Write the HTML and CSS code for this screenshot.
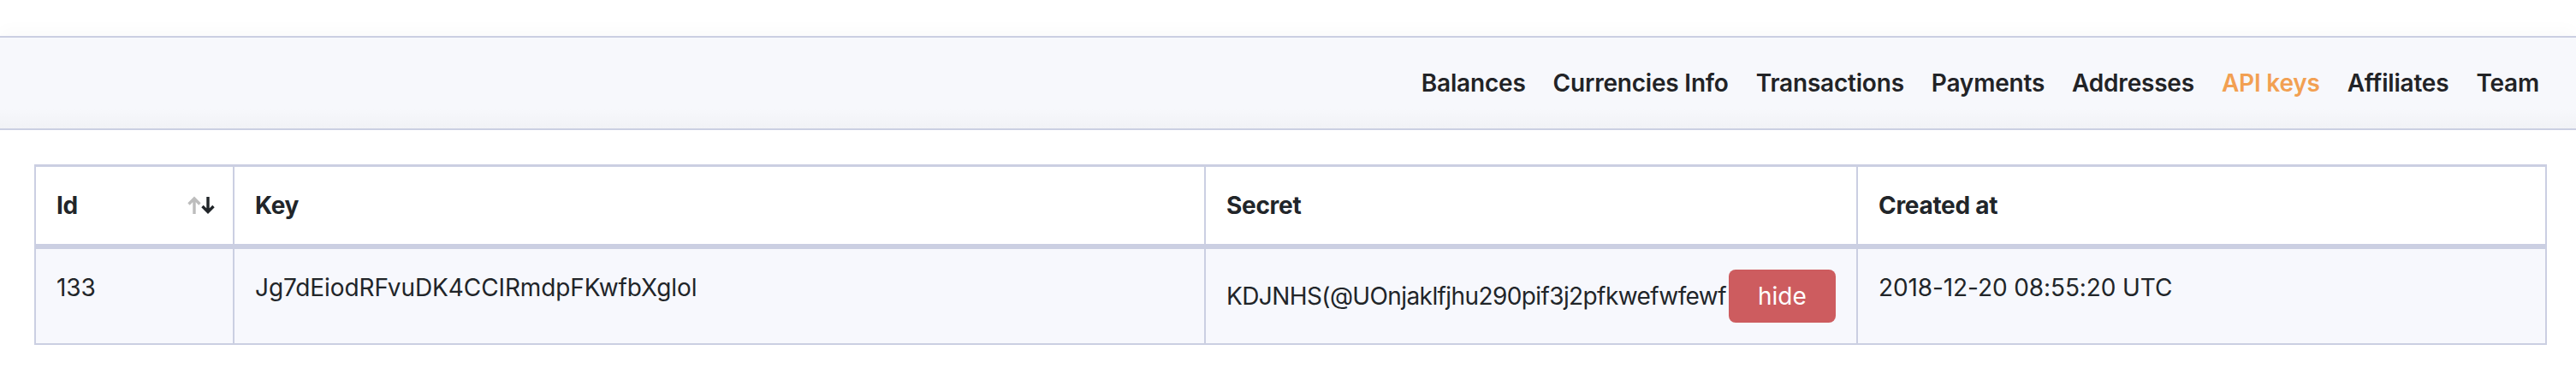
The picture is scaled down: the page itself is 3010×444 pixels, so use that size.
FILE: index.html
```html
<!DOCTYPE html>
<html>
<head>
<meta charset="utf-8">
<link rel="stylesheet" href="styles.css">
</head>
<body>
<div class="page">
  <nav class="navbar">
    <ul class="nav">
      <li><a class="nav-link" href="#">Balances</a></li>
      <li><a class="nav-link" href="#">Currencies Info</a></li>
      <li><a class="nav-link" href="#">Transactions</a></li>
      <li><a class="nav-link" href="#">Payments</a></li>
      <li><a class="nav-link" href="#">Addresses</a></li>
      <li><a class="nav-link active" href="#">API keys</a></li>
      <li><a class="nav-link" href="#">Affiliates</a></li>
      <li><a class="nav-link" href="#">Team</a></li>
    </ul>
  </nav>
  <main class="content">
    <table class="keys-table">
      <thead>
        <tr>
          <th class="col-id">
            <div class="th-sort">
              <span>Id</span>
              <svg class="sort-icon" width="34" height="22" viewBox="0 0 34 22">
                <g fill="none" stroke-width="3.4" stroke-linecap="butt" stroke-linejoin="miter">
                  <path d="M8 21 V3 M1.5 9.5 L8 3 L14.5 9.5" stroke="#bdbdbd"/>
                  <path d="M24 1 V18.5 M17.5 12 L24 18.5 L30.5 12" stroke="#212529"/>
                </g>
              </svg>
            </div>
          </th>
          <th class="col-key">Key</th>
          <th class="col-secret">Secret</th>
          <th class="col-created">Created at</th>
        </tr>
      </thead>
      <tbody>
        <tr>
          <td>133</td>
          <td>Jg7dEiodRFvuDK4CCIRmdpFKwfbXglol</td>
          <td class="secret-cell"><span class="secret-text">KDJNHS(@UOnjaklfjhu290pif3j2pfkwefwfewf</span><button class="btn-hide" type="button">hide</button></td>
          <td>2018-12-20 08:55:20 UTC</td>
        </tr>
      </tbody>
    </table>
  </main>
</div>
</body>
</html>
```
FILE: styles.css
```css
* { box-sizing: border-box; }

html, body {
  margin: 0;
  padding: 0;
  background: #ffffff;
}

body {
  font-family: Inter, "Noto Sans", "Liberation Sans", sans-serif;
  font-size: 28px;
  line-height: 42px;
  color: #212529;
}

.page {
  padding-top: 42px;
}

.navbar {
  border-top: 2px solid #cbcfe2;
  border-bottom: 2px solid #cbcfe2;
  background: linear-gradient(to bottom, #f7f8fc 0%, #f7f8fc 78%, #f1f2f6 100%);
  box-shadow: 0 -8px 18px rgba(0, 0, 0, 0.018);
  padding: 32px 27px 32px 0;
}

.nav {
  list-style: none;
  margin: 0;
  padding: 0;
  display: flex;
  justify-content: flex-end;
}

.nav-link {
  display: block;
  padding: 0 16px;
  font-weight: 600;
  color: #222326;
  text-decoration: none;
  letter-spacing: -0.2px;
}

.nav-link.active {
  color: #f2a052;
}

.content {
  padding: 40px 34px 0 40px;
}

.keys-table {
  width: 100%;
  border-collapse: separate;
  border-spacing: 0;
  table-layout: fixed;
}

.keys-table th,
.keys-table td {
  border-left: 2px solid #cbcfe2;
  padding: 24px 24px;
  text-align: left;
  vertical-align: top;
}

.keys-table th:last-child,
.keys-table td:last-child {
  border-right: 2px solid #cbcfe2;
}

.keys-table th {
  border-top: 3px solid #cbcfe2;
  border-bottom: 6px solid #cbcfe2;
  background: #ffffff;
  font-weight: 700;
  letter-spacing: -0.3px;
}

.keys-table td {
  border-bottom: 2px solid #cbcfe2;
  background: #f7f8fd;
  font-weight: 400;
  letter-spacing: -0.1px;
}

.col-id { width: 232px; padding-right: 19px !important; }
.col-key { width: 1135px; }
.col-secret { width: 762px; }

.th-sort {
  display: flex;
  justify-content: space-between;
  align-items: center;
}

.sort-icon {
  display: block;
}

.secret-cell {
  white-space: nowrap;
}

.secret-text {
  letter-spacing: -0.6px;
}

.btn-hide {
  display: inline-block;
  margin-left: 3px;
  padding: 10px 34px;
  border: 0;
  border-radius: 8px;
  background: #cd5c5f;
  color: #ffffff;
  font-family: inherit;
  font-size: 28px;
  line-height: 42px;
  font-weight: 400;
  letter-spacing: 0;
  vertical-align: baseline;
}
```
